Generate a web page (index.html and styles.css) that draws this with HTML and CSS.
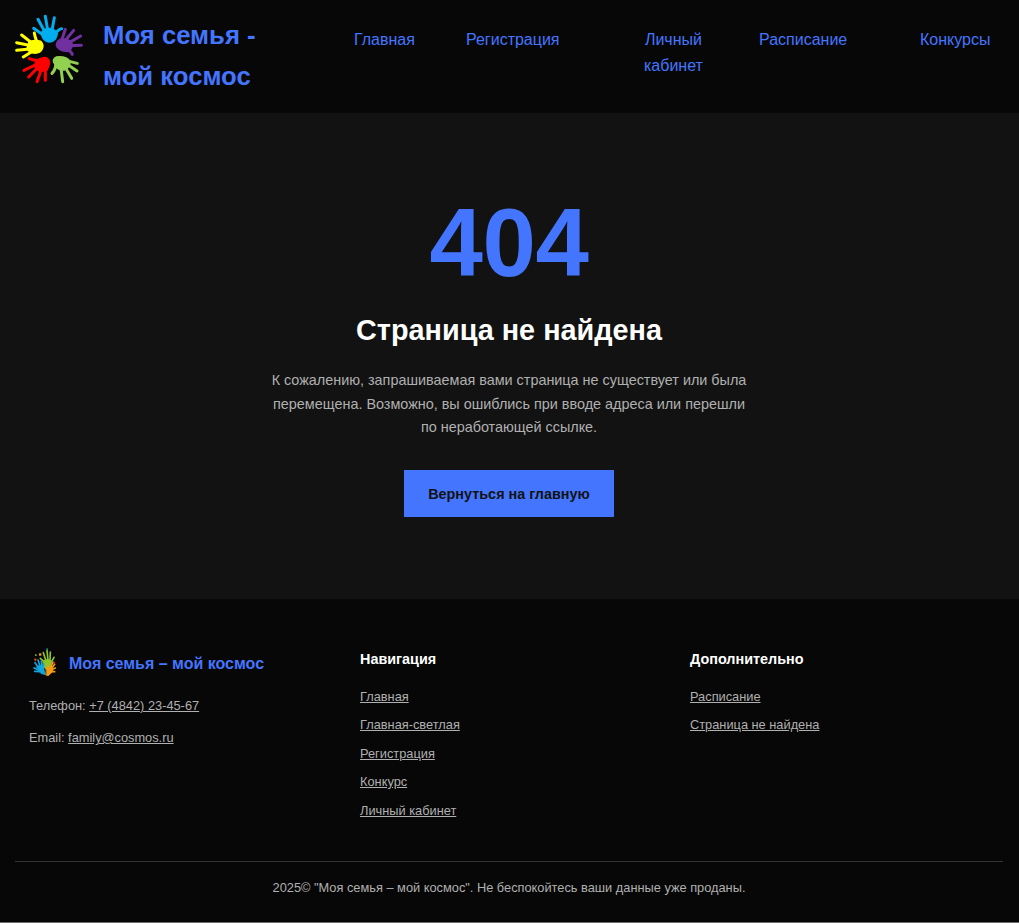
FILE: index.html
```html
<!DOCTYPE html>
<html lang="ru">
<head>
<meta charset="utf-8">
<title>Страница не найдена</title>
<link rel="stylesheet" href="styles.css">
</head>
<body>
<header class="header">
  <svg class="logo" viewBox="45 42 207 210" aria-hidden="true">
    <g class="hand blue"><path class="palm" d="M127 98Q132 87 150 87Q166 90 170 102L165 116Q153 129 139 122Q127 115 127 98Z"/><path d="M135 109L101 85M137 100L114 58M144 96L136 49M155 96L163 53"/><path d="M162 107Q171 90 185 86"/></g>
    <g class="hand purple"><path class="palm" d="M171 136Q171 122 187 118Q211 119 216 134Q214 146 203 153Q175 151 171 136Z"/><path d="M183 127L196 88M192 126L221 91M202 131L242 108M204 137L244 136"/><path d="M197 147Q212 151 217 163"/></g>
    <g class="hand green"><path class="palm" d="M162 185Q160 172 178 172Q201 172 208 185Q209 202 193 208Q178 209 171 200Z"/><path d="M199 182L232 190M197 190L231 213M191 194L215 235M182 196L188 245"/><path d="M168 183Q169 207 156 220"/></g>
    <g class="hand red"><path class="palm" d="M110 184Q124 172 139 175Q149 182 146 193L140 209Q125 216 111 207Q103 197 110 184Z"/><path d="M118 189L72 211M119 197L86 231M127 200L111 245M136 199L136 241"/><path d="M126 180Q108 184 88 176"/></g>
    <g class="hand yellow"><path class="palm" d="M89 126Q107 121 121 125Q130 134 125 146Q120 157 105 158Q88 156 83 145Z"/><path d="M101 133L65 105M95 137L50 128M97 146L50 151M102 151L70 171"/><path d="M116 134Q107 122 103 99"/></g>
  </svg>
  <h1 class="site-title">Моя семья - мой космос</h1>
  <nav class="nav"><a>Главная</a><a>Регистрация</a><a class="cabinet">Личный<br>кабинет</a><a>Расписание</a><a>Конкурсы</a></nav>
</header>
<main class="main">
  <h2 class="code">404</h2>
  <h3 class="heading">Страница не найдена</h3>
  <p class="message">К сожалению, запрашиваемая вами страница не существует или была перемещена. Возможно, вы ошиблись при вводе адреса или перешли по неработающей ссылке.</p>
  <a class="button">Вернуться на главную</a>
</main>
<footer class="footer">
  <div class="columns">
    <section>
      <div class="brand">
        <svg class="mini-logo" viewBox="0 0 78 90" aria-hidden="true">
          <g class="mini lime"><path class="palm" d="M30 39Q42 30 54 37L56 56L46 70L31 56Z"/><path d="M36 43L22 31M39 39L31 14M45 38L42 7M51 39L52 12M53 46L63 28"/></g>
          <g class="mini cyan"><path class="palm" d="M10 57Q22 48 31 58L38 80L25 77Z"/><path d="M17 59L6 44M22 56L15 36M27 57L25 39M31 62L32 48M17 66L3 60M22 71L5 70"/></g>
          <g class="mini orange"><path class="palm" d="M40 60L56 54L60 70L46 83L40 82Z"/><path d="M52 60L60 42M56 61L65 49M55 65L67 60M53 71L65 71M44 64L44 53"/></g>
          <path d="M18 16h7v7h-7z" fill="#f59a15"/><path d="M6 19h5v5H6z" fill="#68a827"/><path d="M4 32h6v6H4z" fill="#ed551e"/><path d="M40 1h5v5h-5z" fill="#187b8b"/><path d="M61 43h5v5h-5z" fill="#e43921"/>
        </svg>
        <h3 class="brand-title">Моя семья – мой космос</h3>
      </div>
      <p class="contact">Телефон: <a class="link">+7 (4842) 23-45-67</a></p>
      <p class="contact">Email: <a class="link">family@cosmos.ru</a></p>
    </section>
    <section>
      <h4 class="column-title">Навигация</h4>
      <ul class="links"><li><a class="link">Главная</a></li><li><a class="link">Главная-светлая</a></li><li><a class="link">Регистрация</a></li><li><a class="link">Конкурс</a></li><li><a class="link">Личный кабинет</a></li></ul>
    </section>
    <section>
      <h4 class="column-title">Дополнительно</h4>
      <ul class="links"><li><a class="link">Расписание</a></li><li><a class="link">Страница не найдена</a></li></ul>
    </section>
  </div>
  <p class="copyright">2025© "Моя семья – мой космос". Не беспокойтесь ваши данные уже проданы.</p>
</footer>
</body>
</html>
```

FILE: styles.css
```css
* { box-sizing: border-box; margin: 0; padding: 0; }
body { font: 16px/1.6 "Liberation Sans", Arial, sans-serif; background: #121212; color: #b0b0b0; height: 923px; overflow: hidden; }
.header { display: flex; height: 113px; padding: 14px 15px; background: #070707; color: #4475ff; }
.logo { width: 69px; height: 70px; flex: none; }
.hand path { fill: none; stroke: currentColor; stroke-width: 9; stroke-linecap: round; }
.hand .palm { fill: currentColor; stroke-width: 8; stroke-linejoin: round; }
.blue { color: #00aeef; }
.purple { color: #7030a0; }
.green { color: #92d050; }
.red { color: #f00; }
.yellow { color: #ff0; }
.site-title { width: 200px; margin-left: 19px; padding-top: 1px; font-size: 25.7px; line-height: 41px; flex: none; }
.nav { display: grid; grid-template-columns: 112px 178px 115px 161px auto; margin-left: 51px; padding-top: 13px; white-space: nowrap; }
.cabinet { justify-self: start; text-align: center; }
.main { display: flex; flex-direction: column; align-items: center; height: 486px; padding: 82px 1px 0 0; }
.code { font-size: 96px; line-height: 96px; color: #4475ff; letter-spacing: -0.4px; }
.heading { margin-top: 16px; font-size: 28.8px; line-height: 46px; color: #fff; }
.message { width: 480px; margin-top: 16px; font-size: 14.4px; line-height: 23.5px; text-align: center; }
.button { width: 210px; height: 47px; margin-top: 30px; background: #4475ff; color: #121212; font-size: 14.4px; line-height: 48px; font-weight: bold; text-align: center; }
.footer { height: 324px; padding: 48px 16px 0 15px; background: #070707; border-bottom: 1px solid #6b6b6b; font-size: 12.8px; }
.columns { display: grid; grid-template-columns: 331px 330px 1fr; height: 214px; padding-left: 14px; }
.brand { display: flex; align-items: center; height: 32px; }
.mini-logo { width: 26px; height: 30px; margin: 0 10px 0 4px; }
.mini path { fill: none; stroke: currentColor; stroke-width: 5; stroke-linecap: round; }
.mini .palm { fill: currentColor; stroke-width: 2; }
.lime { color: #8bc42b; }
.cyan { color: #12a5df; }
.orange { color: #f59a15; }
.brand-title { color: #4475ff; padding-top: 2px; font-size: 16px; }
.contact { margin-top: 11px; line-height: 21px; }
.brand + .contact { margin-top: 16px; }
.link { text-decoration: underline; }
.column-title { padding-top: 1px; color: #fff; font-size: 14.4px; line-height: 23px; }
.links { list-style: none; margin-top: 12px; line-height: 28.4px; }
.copyright { border-top: 1px solid #333; padding-top: 15px; text-align: center; line-height: 21px; }
```
